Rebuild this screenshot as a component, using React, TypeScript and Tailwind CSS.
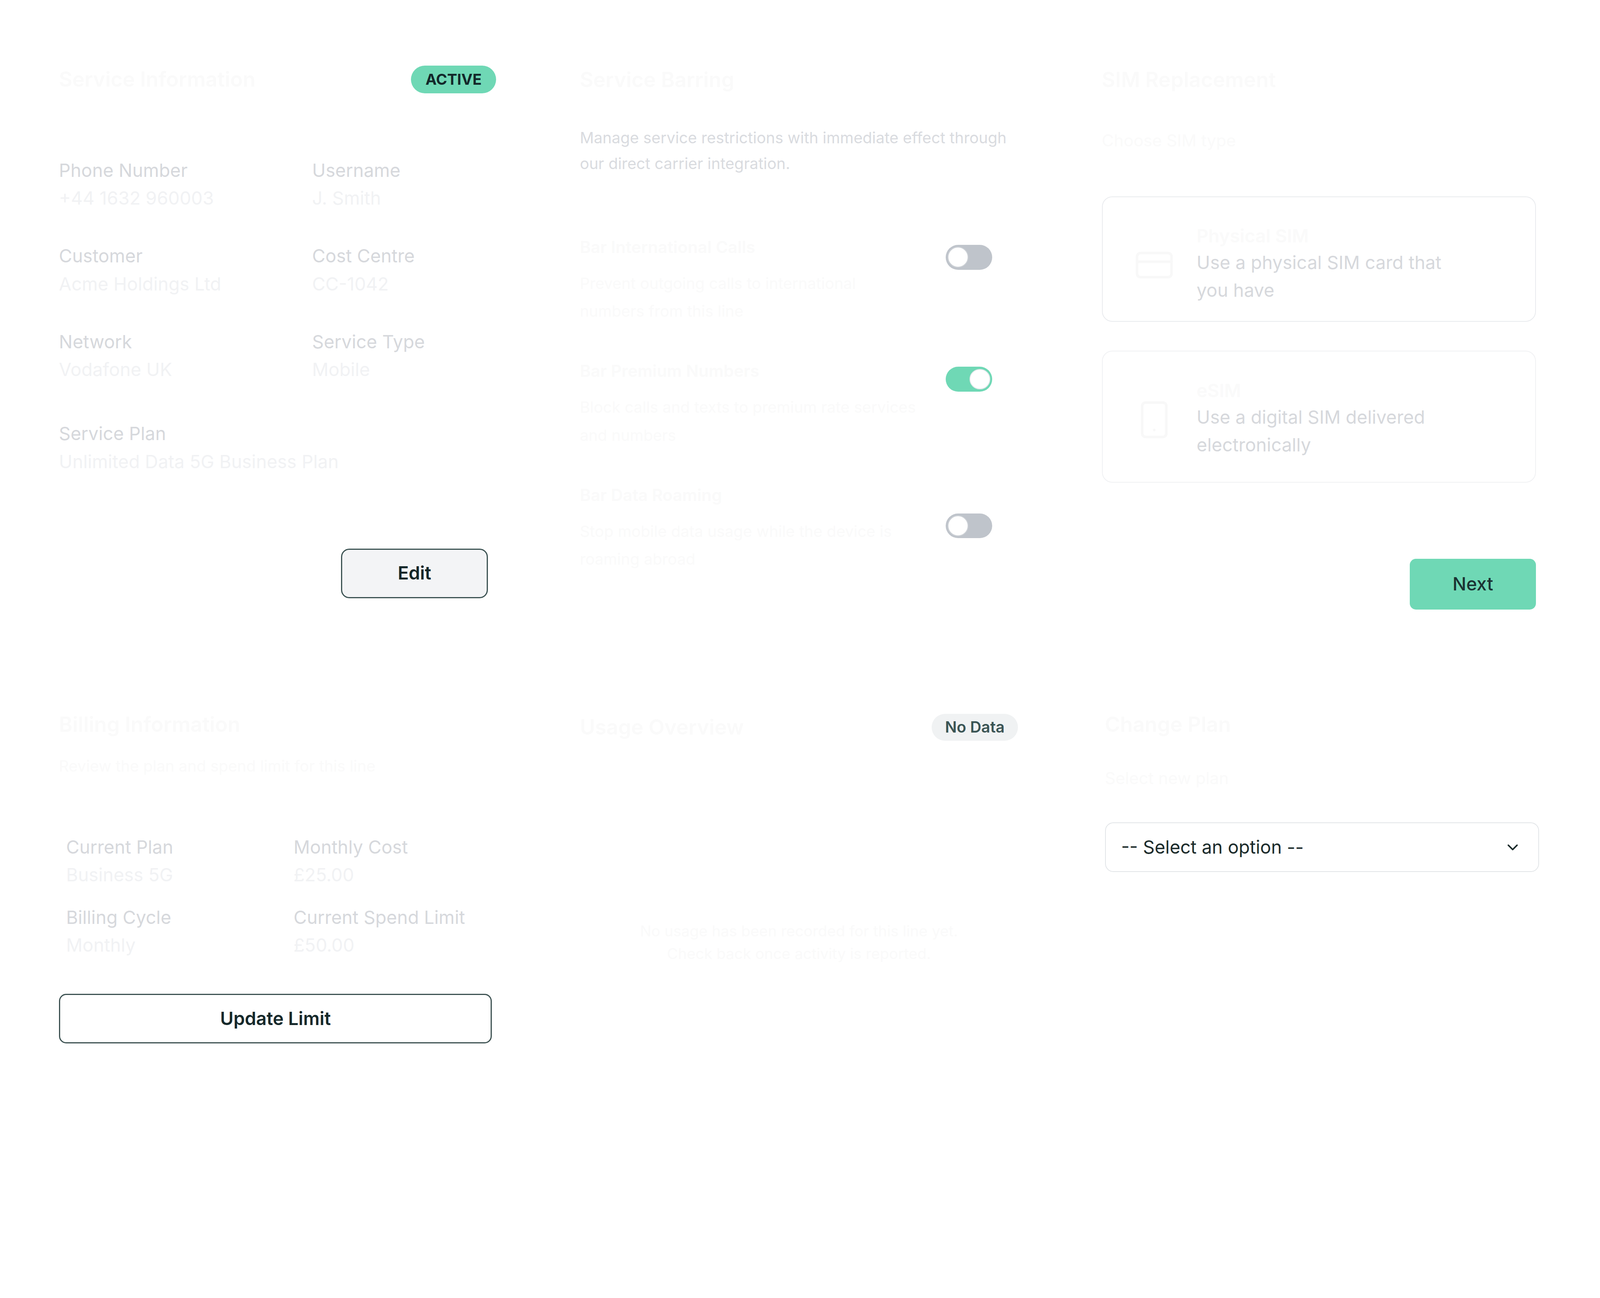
import { useEffect, useState } from "react"
import { ChevronDown, CreditCard, Smartphone } from "lucide-react"

// near-white text that is barely visible in the reference
const ghost = "text-[#fafafa]"

// the layout is drawn on a 1548 x 1025 board and scaled to the window
const BOARD_W = 1548

const Toggle = ({ on, className }: { on: boolean; className: string }) => (
  <div
    className={`flex h-[24px] w-[45px] shrink-0 items-center rounded-full p-[2px] ${
      on ? "justify-end bg-[#6fd8b5]" : "justify-start bg-[#bfc4cb]"
    } ${className}`}
  >
    <span
      className={`h-[20px] w-[20px] rounded-full border bg-white ${
        on ? "border-[#e3e7ea]" : "border-[#cfd3d8]"
      }`}
    />
  </div>
)

const Field = ({ label, value }: { label: string; value: string }) => (
  <div>
    <div className="text-[17.6px] leading-[24px] text-[#d6d8dc]">{label}</div>
    <div className="mt-[3px] text-[17.6px] leading-[24px] text-[#f1f2f4]">{value}</div>
  </div>
)

const restrictions = [
  {
    title: "Bar International Calls",
    desc: "Prevent outgoing calls to international numbers from this line",
    on: false,
    offset: "mt-[10px]",
  },
  {
    title: "Bar Premium Numbers",
    desc: "Block calls and texts to premium rate services and numbers",
    on: true,
    offset: "mt-[8px]",
  },
  {
    title: "Bar Data Roaming",
    desc: "Stop mobile data usage while the device is roaming abroad",
    on: false,
    offset: "mt-[30px]",
  },
]

export default function App() {
  const [scale, setScale] = useState(() => window.innerWidth / BOARD_W)

  useEffect(() => {
    const onResize = () => setScale(window.innerWidth / BOARD_W)
    window.addEventListener("resize", onResize)
    return () => window.removeEventListener("resize", onResize)
  }, [])

  return (
    <div className="h-screen w-screen overflow-hidden bg-white">
      <div
        className="h-[1025px] w-[1548px] overflow-hidden bg-white font-[Inter,sans-serif]"
        style={{ zoom: String(scale) }}
      >
        <div className="grid grid-cols-[423px_424px_423px] gap-x-[81px] gap-y-[97px] pl-[57px] pt-[63px]">
          {/* Service information */}
          <section>
            <div className="flex h-[28px] items-center justify-between">
              <h2 className={`text-[20px] font-semibold ${ghost}`}>Service Information</h2>
              <span className="flex h-[27px] items-center rounded-full bg-[#6fd8b5] px-[14px] text-[14.5px] font-bold text-[#13282a]">
                ACTIVE
              </span>
            </div>

            <div className="mt-[62px] grid grid-cols-[245px_1fr] gap-y-[32px]">
              <Field label="Phone Number" value="+44 1632 960003" />
              <Field label="Username" value="J. Smith" />
              <Field label="Customer" value="Acme Holdings Ltd" />
              <Field label="Cost Centre" value="CC-1042" />
              <Field label="Network" value="Vodafone UK" />
              <Field label="Service Type" value="Mobile" />
              <div className="col-span-2 mt-[6px]">
                <Field label="Service Plan" value="Unlimited Data 5G Business Plan" />
              </div>
            </div>

            <div className="mt-[72px] flex justify-end pr-[8px]">
              <button className="h-[48px] w-[142px] rounded-[8px] border-[1.5px] border-[#3b5252] bg-[#f3f4f6] text-[17.6px] font-semibold text-[#132628]">
                Edit
              </button>
            </div>
          </section>

          {/* Service barring */}
          <section>
            <h2 className={`h-[28px] text-[20px] font-semibold leading-[28px] ${ghost}`}>Service Barring</h2>
            <p className="mt-[30px] text-[15px] leading-[25px] text-[#d9dbdf]">
              Manage service restrictions with immediate effect through our direct carrier integration.
            </p>

            <div className="mt-[56px] flex flex-col gap-[32px] pr-[25px]">
              {restrictions.map((r) => (
                <div key={r.title} className="flex items-start justify-between">
                  <div className="w-[330px]">
                    <div className={`text-[16px] font-semibold leading-[24px] ${ghost}`}>{r.title}</div>
                    <div className={`mt-[10px] text-[15px] leading-[27px] ${ghost}`}>{r.desc}</div>
                  </div>
                  <Toggle on={r.on} className={r.offset} />
                </div>
              ))}
            </div>
          </section>

          {/* SIM replacement */}
          <section className="pr-[3px]">
            <h2 className={`h-[28px] text-[20px] font-semibold leading-[28px] ${ghost}`}>SIM Replacement</h2>
            <div className={`mt-[33px] text-[16px] leading-[24px] ${ghost}`}>Choose SIM type</div>

            <div className="mt-[42px] flex flex-col gap-[28px]">
              <div className="flex rounded-[10px] border border-[#e9ebee] pb-[16px] pl-[30px] pt-[26px]">
                <CreditCard className="mt-[20px] h-[40px] w-[40px] text-[#f8f8f8]" strokeWidth={1.5} />
                <div className="ml-[21px] w-[260px]">
                  <div className={`text-[17.6px] font-semibold leading-[24px] ${ghost}`}>Physical SIM</div>
                  <div className="text-[17.6px] leading-[27px] text-[#d6d8dc]">Use a physical SIM card that you have</div>
                </div>
              </div>
              <div className="flex rounded-[10px] border border-[#f0f1f3] pb-[22px] pl-[30px] pt-[26px]">
                <Smartphone className="mt-[20px] h-[40px] w-[40px] text-[#f8f8f8]" strokeWidth={1.5} />
                <div className="ml-[21px] w-[260px]">
                  <div className={`text-[17.6px] font-semibold leading-[24px] ${ghost}`}>eSIM</div>
                  <div className="text-[17.6px] leading-[27px] text-[#d6d8dc]">Use a digital SIM delivered electronically</div>
                </div>
              </div>
            </div>

            <div className="mt-[74px] flex justify-end">
              <button className="h-[49px] w-[122px] rounded-[6px] bg-[#6fd8b5] text-[17.6px] font-medium text-[#1b3333]">
                Next
              </button>
            </div>
          </section>

          {/* Billing */}
          <section>
            <h2 className={`h-[28px] text-[20px] font-semibold leading-[28px] ${ghost}`}>Billing Information</h2>
            <div className={`mt-[15px] text-[15px] leading-[24px] ${ghost}`}>
              Review the plan and spend limit for this line
            </div>

            <div className="mt-[54px] grid grid-cols-[220px_1fr] gap-y-[17px] px-[7px]">
              <Field label="Current Plan" value="Business 5G" />
              <Field label="Monthly Cost" value="£25.00" />
              <Field label="Billing Cycle" value="Monthly" />
              <Field label="Current Spend Limit" value="£50.00" />
            </div>

            <button className="mt-[35px] h-[48px] w-[419px] rounded-[7px] border-[1.5px] border-[#3c5151] bg-white text-[17.6px] font-semibold text-[#15282a]">
              Update Limit
            </button>
          </section>

          {/* Usage */}
          <section>
            <div className="flex h-[28px] items-center justify-between pt-[6px]">
              <h2 className={`text-[20px] font-semibold ${ghost}`}>Usage Overview</h2>
              <span className="flex h-[26px] items-center rounded-full bg-[#f0f2f3] px-[13px] text-[15px] font-semibold text-[#3a5454]">
                No Data
              </span>
            </div>
            <div className={`mt-[175px] text-center text-[14.5px] leading-[22px] ${ghost}`}>
              No usage has been recorded for this line yet.
              <br />
              Check back once activity is reported.
            </div>
          </section>

          {/* Change plan */}
          <section className="pl-[3px]">
            <h2 className={`h-[28px] text-[20px] font-semibold leading-[28px] ${ghost}`}>Change Plan</h2>
            <div className={`mt-[26px] text-[16px] leading-[24px] ${ghost}`}>Select new plan</div>
            <div className="relative mt-[31px]">
              <select className="h-[48px] w-full appearance-none rounded-[8px] border border-[#e2e5e8] bg-white pl-[15px] pr-[40px] font-[Inter,sans-serif] text-[17.6px] text-[#1b2b2b]">
                <option>-- Select an option --</option>
              </select>
              <ChevronDown
                className="pointer-events-none absolute right-[17px] top-1/2 h-[17px] w-[17px] -translate-y-1/2 text-[#1b2b2b]"
                strokeWidth={2}
              />
            </div>
          </section>
        </div>
      </div>
    </div>
  )
}
